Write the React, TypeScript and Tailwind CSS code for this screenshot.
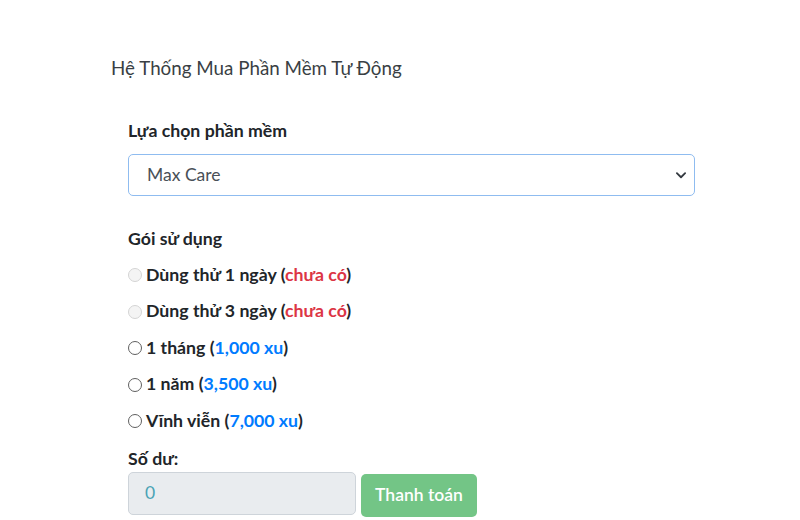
const font = { fontFamily: '"Lato", "Noto Sans", sans-serif' };

type Plan = {
  name: string;
  price: string;
  disabled?: boolean;
};

const plans: Plan[] = [
  { name: "Dùng thử 1 ngày", price: "chưa có", disabled: true },
  { name: "Dùng thử 3 ngày", price: "chưa có", disabled: true },
  { name: "1 tháng", price: "1,000 xu" },
  { name: "1 năm", price: "3,500 xu" },
  { name: "Vĩnh viễn", price: "7,000 xu" },
];

const Radio = ({ disabled }: { disabled?: boolean }) =>
  disabled ? (
    <span className="inline-block w-[14px] h-[14px] rounded-full border border-[#d4d4d4] bg-[#f4f4f4] shrink-0" />
  ) : (
    <span className="inline-block w-[14px] h-[14px] rounded-full border border-[#5f5f5f] bg-white shrink-0" />
  );

export default function App() {
  return (
    <div className="w-[800px] h-[520px] bg-white overflow-hidden" style={font}>
      <div className="pl-[111px] pt-[53px]">
        {/* Header */}
        <h5 className="text-[18.8px] leading-[30px] text-[#3a3f44]">
          Hệ Thống Mua Phần Mềm Tự Động
        </h5>

        {/* Form */}
        <div className="pl-[17px] w-[584px]">
          <label className="block mt-[35px] text-[17.7px] leading-[26px] font-bold text-[#212529]">
            Lựa chọn phần mềm
          </label>
          <div className="mt-[10px] h-[42px] w-[567px] border border-[#8fbcf0] rounded-[5px] flex items-center justify-between pl-[18px] pr-[7px]">
            <span className="text-[17.5px] text-[#495057]">Max Care</span>
            <svg width="12" height="12" viewBox="0 0 16 16" fill="none">
              <path
                d="M2.5 5.5 8 11l5.5-5.5"
                stroke="#343a40"
                strokeWidth="2.4"
                strokeLinecap="round"
                strokeLinejoin="round"
              />
            </svg>
          </div>

          <label className="block mt-[30px] text-[17.7px] leading-[26px] font-bold text-[#212529]">
            Gói sử dụng
          </label>
          <div className="mt-[5px]">
            {plans.map((p) => (
              <div key={p.name} className="h-[36.5px] flex items-center gap-[4px]">
                <Radio disabled={p.disabled} />
                <span className="text-[17.7px] font-bold text-[#212529]">
                  {p.name} (
                  <span className={p.disabled ? "text-[#dc3545]" : "text-[#007bff]"}>
                    {p.price}
                  </span>
                  )
                </span>
              </div>
            ))}
          </div>

          <label className="block mt-[6px] text-[17.7px] leading-[26px] font-bold text-[#212529]">
            Số dư:
          </label>
          <div className="flex items-start">
            <div className="h-[43px] w-[228px] bg-[#e9ecef] border border-[#ced4da] rounded-[5px] flex items-center pl-[16px]">
              <span className="text-[17.5px] text-[#4aa3b5]">0</span>
            </div>
            <button className="ml-[5px] mt-[2px] h-[43px] w-[116px] rounded-[5px] bg-[#73c586] text-white text-[17.5px] font-semibold">
              Thanh toán
            </button>
          </div>
        </div>
      </div>
    </div>
  );
}
